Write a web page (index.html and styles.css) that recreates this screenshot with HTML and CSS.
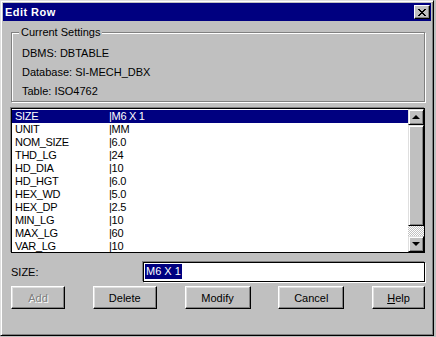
FILE: index.html
```html
<!DOCTYPE html>
<html lang="en">
<head>
    <meta charset="UTF-8">
    <title>Edit Row</title>
    <link rel="stylesheet" href="styles.css">
</head>
<body>

<div class="window">
    <div class="titlebar">
        <span class="title">Edit Row</span>
        <button class="close" aria-label="Close">
            <svg width="8" height="7" viewBox="0 0 8 7" shape-rendering="crispEdges">
                <path d="M0 0h2v1h-2zM6 0h2v1h-2zM1 1h2v1h-2zM5 1h2v1h-2zM2 2h4v1h-4zM3 3h2v1h-2zM2 4h4v1h-4zM1 5h2v1h-2zM5 5h2v1h-2zM0 6h2v1h-2zM6 6h2v1h-2z" fill="#000"/>
            </svg>
        </button>
    </div>

    <div class="content">
        <div class="group">
            <span class="group-label">Current Settings</span>
            <div class="group-line">DBMS: DBTABLE</div>
            <div class="group-line">Database: SI-MECH_DBX</div>
            <div class="group-line">Table: ISO4762</div>
        </div>

        <div class="listbox">
            <ul class="rows">
                <li class="row selected"><span class="key">SIZE</span><span>|M6 X 1</span></li>
                <li class="row"><span class="key">UNIT</span><span>|MM</span></li>
                <li class="row"><span class="key">NOM_SIZE</span><span>|6.0</span></li>
                <li class="row"><span class="key">THD_LG</span><span>|24</span></li>
                <li class="row"><span class="key">HD_DIA</span><span>|10</span></li>
                <li class="row"><span class="key">HD_HGT</span><span>|6.0</span></li>
                <li class="row"><span class="key">HEX_WD</span><span>|5.0</span></li>
                <li class="row"><span class="key">HEX_DP</span><span>|2.5</span></li>
                <li class="row"><span class="key">MIN_LG</span><span>|10</span></li>
                <li class="row"><span class="key">MAX_LG</span><span>|60</span></li>
                <li class="row"><span class="key">VAR_LG</span><span>|10</span></li>
            </ul>
            <div class="scrollbar">
                <div class="sb-btn"><span class="arrow-up"></span></div>
                <div class="sb-thumb"></div>
                <div class="sb-track"></div>
                <div class="sb-btn"><span class="arrow-down"></span></div>
            </div>
        </div>

        <div class="field-row">
            <label class="field-label">SIZE:</label>
            <div class="field"><span class="field-sel">M6 X 1</span></div>
        </div>

        <div class="buttons">
            <button class="btn btn-add" disabled>Add</button>
            <button class="btn btn-delete">Delete</button>
            <button class="btn btn-modify">Modify</button>
            <button class="btn btn-cancel">Cancel</button>
            <button class="btn btn-help"><u>H</u>elp</button>
        </div>
    </div>
</div>

</body>
</html>
```

FILE: styles.css
```css
html, body {
    margin: 0;
    background-color: #c0c0c0;
}
body {
    font-family: "Liberation Sans", Arial, sans-serif;
    font-size: 11px;
    color: #000;
}
.window {
    width: 434px;
    height: 336px;
    box-sizing: border-box;
    padding: 2px;
    background-color: #c0c0c0;
    border: 1px solid;
    border-color: #dfdfdf #000 #000 #dfdfdf;
    box-shadow: inset 1px 1px #fff, inset -1px -1px #808080;
}

/* Title bar */
.titlebar {
    height: 18px;
    display: flex;
    align-items: center;
    justify-content: space-between;
    padding: 0 1px 0 2px;
    background-color: #000080;
}
.title {
    color: #fff;
    font-weight: bold;
    font-size: 11px;
    letter-spacing: 0.45px;
    line-height: 18px;
}
.close {
    width: 16px;
    height: 14px;
    padding: 0;
    display: flex;
    align-items: center;
    justify-content: center;
    background-color: #c0c0c0;
    border: 1px solid;
    border-color: #fff #000 #000 #fff;
    box-shadow: inset -1px -1px #808080;
}

.content {
    padding: 11px 6px 0 8px;
}

/* Group box */
.group {
    position: relative;
    height: 68px;
    box-sizing: content-box;
    padding: 11px 0 0 10px;
    height: 57px;
    border: 1px solid #808080;
    box-shadow: inset 1px 1px #fff, 1px 1px #fff;
}
.group-label {
    position: absolute;
    top: -7px;
    left: 7px;
    padding: 0 2px;
    line-height: 13px;
    background-color: #c0c0c0;
}
.group-line {
    line-height: 19px;
}

/* List box */
.listbox {
    margin-top: 6px;
    height: 145px;
    box-sizing: border-box;
    display: flex;
    background-color: #fff;
    border: 1px solid #000;
    box-shadow: -1px -1px #808080;
}
.rows {
    flex: 1;
    margin: 0;
    padding: 1px 0 0 0;
    list-style: none;
    overflow: hidden;
    letter-spacing: -0.3px;
}
.row {
    display: flex;
    height: 13px;
    line-height: 13px;
    padding-left: 3px;
    white-space: pre;
}
.row.selected {
    background-color: #000080;
    color: #fff;
}
.key {
    width: 94px;
}

/* Scrollbar */
.scrollbar {
    width: 16px;
    display: flex;
    flex-direction: column;
}
.sb-btn, .sb-thumb {
    box-sizing: border-box;
    background-color: #c0c0c0;
    border: 1px solid;
    border-color: #dfdfdf #000 #000 #dfdfdf;
    box-shadow: inset 1px 1px #fff, inset -1px -1px #808080;
}
.sb-btn {
    height: 16px;
    display: flex;
    align-items: center;
    justify-content: center;
}
.sb-thumb {
    height: 101px;
}
.sb-track {
    height: 10px;
    background: repeating-conic-gradient(#c0c0c0 0 25%, #fff 0 50%) 0 0 / 2px 2px;
}
.arrow-up, .arrow-down {
    width: 0;
    height: 0;
    border-left: 4px solid transparent;
    border-right: 4px solid transparent;
}
.arrow-up {
    border-bottom: 4px solid #000;
}
.arrow-down {
    border-top: 4px solid #000;
}

/* Edit field */
.field-row {
    margin-top: 9px;
    display: flex;
    align-items: center;
}
.field-label {
    width: 132px;
}
.field {
    flex: 1;
    height: 20px;
    box-sizing: border-box;
    padding: 1px 0 0 1px;
    background-color: #fff;
    border: 1px solid #000;
    box-shadow: -1px -1px #808080, 1px 1px #fff;
}
.field-sel {
    display: inline-block;
    line-height: 15px;
    padding: 0 1px;
    background-color: #000080;
    color: #fff;
}

/* Buttons */
.buttons {
    margin-top: 4px;
    display: flex;
    justify-content: space-between;
}
.btn {
    height: 23px;
    padding: 0;
    font-family: inherit;
    font-size: 11px;
    color: #000;
    background-color: #c0c0c0;
    border: 1px solid;
    border-color: #fff #000 #000 #fff;
    box-shadow: inset -1px -1px #808080, inset 1px 1px #dfdfdf;
}
.btn[disabled] {
    color: #808080;
    text-shadow: 1px 1px #fff;
}
.btn-add { width: 54px; }
.btn-delete { width: 64px; }
.btn-modify { width: 66px; }
.btn-cancel { width: 66px; }
.btn-help { width: 53px; }
```
